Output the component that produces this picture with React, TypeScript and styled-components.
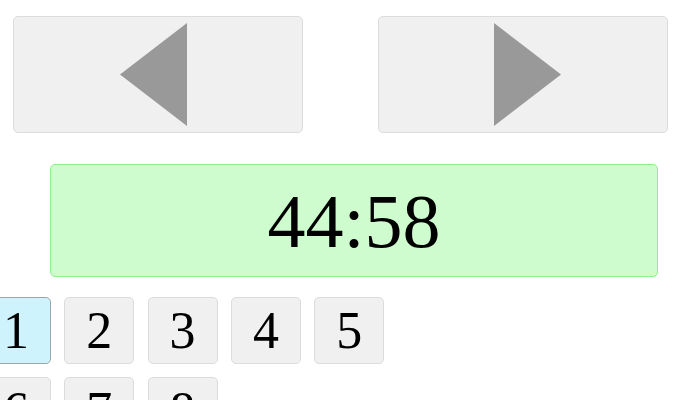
import React, { useState } from "react";
import styled, { createGlobalStyle } from "styled-components";

const Global = createGlobalStyle`
  html, body { margin: 0; padding: 0; background: #fff; overflow: hidden; }
  body { font-family: "Liberation Serif", "Times New Roman", serif; }
`;

const Page = styled.div`
  width: 695px;
  display: flex;
  flex-direction: column;
`;

const NavRow = styled.div`
  display: flex;
  justify-content: space-between;
  padding: 16px 27px 0 13px;
`;

const NavButton = styled.button`
  width: 290px;
  height: 117px;
  box-sizing: border-box;
  background: #f0f0f0;
  border: 1px solid #dcdcdc;
  border-radius: 5px;
  padding: 0;
  display: flex;
  align-items: center;
  justify-content: center;
  cursor: pointer;
`;

const TimerBox = styled.div`
  margin: 31px 37px 0 50px;
  height: 113px;
  box-sizing: border-box;
  background: #cffccf;
  border: 1px solid #8ef08e;
  border-radius: 5px;
  display: flex;
  align-items: center;
  justify-content: center;
  font-family: "Liberation Serif", "Times New Roman", serif;
  font-size: 76px;
  color: #000;
  line-height: 1;
`;

const PageGrid = styled.div`
  margin: 20px 0 0 -19px;
  width: 420px;
  display: flex;
  flex-wrap: wrap;
  gap: 13px 13.3px;
`;

const PageButton = styled.button<{ $active?: boolean }>`
  width: 70px;
  height: 67px;
  box-sizing: border-box;
  padding: 0;
  background: ${(p) => (p.$active ? "#cff3fc" : "#f0f0f0")};
  border: 1px solid ${(p) => (p.$active ? "#9aa6aa" : "#dcdcdc")};
  border-radius: 5px;
  font-family: "Liberation Serif", "Times New Roman", serif;
  font-size: 52px;
  color: #000;
  line-height: 1;
  display: flex;
  align-items: center;
  justify-content: center;
  cursor: pointer;
`;

const Arrow = ({ dir }: { dir: "left" | "right" }) => (
  <svg width="76" height="103" viewBox="0 0 76 103">
    {dir === "left" ? (
      <polygon points="0,51.5 67,0 67,103" fill="#999999" />
    ) : (
      <polygon points="9,0 76,51.5 9,103" fill="#999999" />
    )}
  </svg>
);

export default function App() {
  const [page, setPage] = useState(1);
  const pages = [1, 2, 3, 4, 5, 6, 7, 8];
  return (
    <Page>
      <Global />
      <NavRow>
        <NavButton aria-label="previous">
          <Arrow dir="left" />
        </NavButton>
        <NavButton aria-label="next">
          <Arrow dir="right" />
        </NavButton>
      </NavRow>
      <TimerBox>44:58</TimerBox>
      <PageGrid>
        {pages.map((n) => (
          <PageButton key={n} $active={n === page} onClick={() => setPage(n)}>
            {n}
          </PageButton>
        ))}
      </PageGrid>
    </Page>
  );
}
